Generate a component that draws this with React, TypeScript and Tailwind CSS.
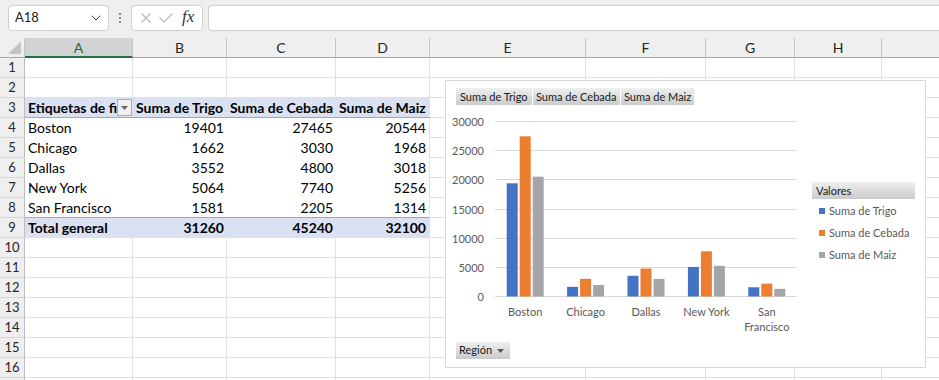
import React from "react";
import { ChevronDown } from "lucide-react";

const COLS = [
  { l: "A", w: "w-[108px]" },
  { l: "B", w: "w-[94px]" },
  { l: "C", w: "w-[109px]" },
  { l: "D", w: "w-[94px]" },
  { l: "E", w: "w-[156px]" },
  { l: "F", w: "w-[120px]" },
  { l: "G", w: "w-[89px]" },
  { l: "H", w: "w-[87px]" },
  { l: "", w: "w-[120px]" },
];

const DATA: [string, number, number, number][] = [
  ["Boston", 19401, 27465, 20544],
  ["Chicago", 1662, 3030, 1968],
  ["Dallas", 3552, 4800, 3018],
  ["New York", 5064, 7740, 5256],
  ["San Francisco", 1581, 2205, 1314],
];

const GRID = "border-r border-b border-[#e1e1e1]";

function RowHeader({ n }: { n: number | null }) {
  return (
    <div className="w-[25px] shrink-0 h-full bg-[#efefef] border-r border-r-[#bdbdbd] border-b border-b-[#d6d6d6] flex items-center justify-center text-[13px] text-[#262626]">
      {n}
    </div>
  );
}

function PlainCells({ from }: { from: number }) {
  return (
    <>
      {COLS.slice(from).map((c, i) => (
        <div key={i} className={`${c.w} shrink-0 h-full ${GRID}`} />
      ))}
    </>
  );
}

function Row({ n, children }: { n: number | null; children?: React.ReactNode }) {
  return (
    <div className="flex h-[20px]">
      <RowHeader n={n} />
      {children ? (
        <>
          {children}
          <PlainCells from={4} />
        </>
      ) : (
        <PlainCells from={0} />
      )}
    </div>
  );
}

function Chart() {
  const scale = 175 / 30000;
  const base = 191;
  const colors = ["#4472c4", "#ed7d31", "#a5a5a5"];
  const ticks = [0, 5000, 10000, 15000, 20000, 25000, 30000];
  return (
    <div className="absolute left-[445px] top-[80px] w-[481px] h-[288px] border border-[#d9d9d9] bg-white flex flex-col text-[11px]">
      <div className="mt-[7px] ml-[10px] flex gap-[1px] h-[17px] text-[#1a1a1a]">
        <div className="w-[76px] h-[17px] leading-[17px] pl-[4px] bg-linear-to-b from-[#efefef] to-[#cbcbcb]">Suma de Trigo</div>
        <div className="w-[87px] h-[17px] leading-[17px] pl-[3px] bg-linear-to-b from-[#efefef] to-[#cbcbcb]">Suma de Cebada</div>
        <div className="w-[73px] h-[17px] leading-[17px] pl-[3px] bg-linear-to-b from-[#efefef] to-[#cbcbcb]">Suma de Maiz</div>
      </div>
      <div className="flex h-[231px]">
        <svg width="359" height="231" className="shrink-0">
          {ticks.map((t) => {
            const y = Math.round(base - t * scale) + 0.5;
            return (
              <g key={t}>
                <line x1={49} x2={351} y1={y} y2={y} stroke="#d9d9d9" strokeWidth={1} />
                <text x={38} y={y} textAnchor="end" dominantBaseline="central" fontSize={11} fill="#595959" fontFamily="Lato, sans-serif">
                  {t}
                </text>
              </g>
            );
          })}
          {DATA.map((d, i) => {
            const c = 49 + 60.4 * (i + 0.5);
            const xs = [c - 18.5, c - 5.5, c + 7.5];
            return (
              <g key={d[0]}>
                {[d[1], d[2], d[3]].map((v, j) => {
                  const h = v * scale;
                  return <rect key={j} x={xs[j]} y={base - h + 0.5} width={11} height={h} fill={colors[j]} />;
                })}
                {d[0] === "San Francisco" ? (
                  <text textAnchor="middle" fontSize={11} fill="#595959" fontFamily="Lato, sans-serif">
                    <tspan x={c} y={206} dominantBaseline="central">San</tspan>
                    <tspan x={c} y={221} dominantBaseline="central">Francisco</tspan>
                  </text>
                ) : (
                  <text x={c} y={206} textAnchor="middle" dominantBaseline="central" fontSize={11} fill="#595959" fontFamily="Lato, sans-serif">
                    {d[0]}
                  </text>
                )}
              </g>
            );
          })}
        </svg>
        <div className="ml-[7px] mt-[77px] w-[103px] flex flex-col">
          <div className="h-[17px] leading-[17px] pl-[4px] bg-linear-to-b from-[#efefef] to-[#cbcbcb] text-[#1a1a1a]">Valores</div>
          <div className="mt-[1px]">
            {["Suma de Trigo", "Suma de Cebada", "Suma de Maiz"].map((s, i) => (
              <div key={s} className="h-[22px] flex items-center pl-[7px] text-[#595959]">
                <span className="w-[6px] h-[6px] mr-[4px] shrink-0" style={{ backgroundColor: colors[i] }} />
                {s}
              </div>
            ))}
          </div>
        </div>
      </div>
      <div className="mt-[6px] ml-[10px] w-[54px] h-[17px] bg-linear-to-b from-[#efefef] to-[#cbcbcb] flex items-center pl-[3px] text-[#1a1a1a]">
        Región
        <svg width="7" height="4" className="ml-auto mr-[6px]">
          <path d="M0 0 L7 0 L3.5 4 Z" fill="#555" />
        </svg>
      </div>
    </div>
  );
}

export default function App() {
  const fmt = (n: number) => String(n);
  return (
    <div className="relative w-[939px] h-[380px] overflow-hidden bg-white font-['Lato',sans-serif] text-black">
      {/* formula bar */}
      <div className="h-[38px] bg-[#efefef] flex items-start pt-[5px]">
        <div className="ml-[8px] w-[101px] h-[26px] rounded-[4px] border border-[#d0d0d0] bg-white flex items-center justify-between pl-[6px] pr-[4px] text-[13px] text-[#222]">
          <span>A18</span>
          <ChevronDown size={16} strokeWidth={1.5} color="#444" />
        </div>
        <div className="w-[22px] h-[26px] flex flex-col items-center justify-center gap-[2px]">
          <span className="w-[2px] h-[2px] bg-[#888]" />
          <span className="w-[2px] h-[2px] bg-[#888]" />
          <span className="w-[2px] h-[2px] bg-[#888]" />
        </div>
        <div className="w-[72px] h-[26px] rounded-[4px] border border-[#d0d0d0] bg-white flex items-center pl-[9px]">
          <svg width="10" height="10" viewBox="0 0 10 10">
            <path d="M0.5 0.5 L9.5 9.5 M9.5 0.5 L0.5 9.5" stroke="#b8b8b8" strokeWidth="1.2" fill="none" />
          </svg>
          <svg width="14" height="10" viewBox="0 0 14 10" className="ml-[8px]">
            <path d="M0.5 4.5 L5 9 L13.5 0.5" stroke="#b8b8b8" strokeWidth="1.2" fill="none" />
          </svg>
          <span className="ml-[9px] font-['Liberation_Serif',serif] italic text-[17px] leading-none text-[#333] -mt-[3px]">fx</span>
        </div>
        <div className="ml-[5px] flex-1 h-[26px] rounded-l-[4px] border border-r-0 border-[#d0d0d0] bg-white" />
      </div>

      {/* column headers */}
      <div className="flex h-[20px] bg-[#efefef] text-[14px] text-[#262626]">
        <div className="w-[25px] shrink-0 h-full border-r border-[#c6c6c6] border-b border-b-[#a6a6a6] flex items-end justify-end pr-[3px] pb-[3px]">
          <svg width="13" height="13" viewBox="0 0 13 13">
            <path d="M13 0 L13 13 L0 13 Z" fill="#c4c4c4" />
          </svg>
        </div>
        {COLS.map((c, i) => (
          <div
            key={i}
            className={`${c.w} shrink-0 h-full border-r border-[#c6c6c6] flex items-center justify-center ${
              i === 0 ? "bg-[#d3d3d3] border-b-2 border-b-[#217346] text-[#1c6a3c]" : "border-b border-b-[#a6a6a6]"
            }`}
          >
            {c.l}
          </div>
        ))}
      </div>

      {/* rows */}
      <div className="text-[14px]">
        <Row n={1} />
        <Row n={2} />
        <Row n={3}>
          <div className="w-[108px] shrink-0 h-full bg-[#d9e1f2] border-b border-[#8ea9db] flex items-start font-bold">
            <span className="flex-1 overflow-hidden whitespace-nowrap pl-[3px] leading-[19px]">Etiquetas de fila</span>
            <span className="w-[15px] h-[17px] mt-[1px] mr-[1px] shrink-0 border border-[#ababab] bg-[#f0f0f0] flex items-center justify-center">
              <svg width="7" height="4">
                <path d="M0 0 L7 0 L3.5 4 Z" fill="#666" />
              </svg>
            </span>
          </div>
          <div className="w-[94px] shrink-0 h-full bg-[#d9e1f2] border-b border-[#8ea9db] pl-[3px] overflow-hidden whitespace-nowrap font-bold leading-[19px]">Suma de Trigo</div>
          <div className="w-[109px] shrink-0 h-full bg-[#d9e1f2] border-b border-[#8ea9db] pl-[3px] overflow-hidden whitespace-nowrap font-bold leading-[19px]">Suma de Cebada</div>
          <div className="w-[94px] shrink-0 h-full bg-[#d9e1f2] border-b border-b-[#8ea9db] border-r border-r-[#e1e1e1] pl-[3px] overflow-hidden whitespace-nowrap font-bold leading-[19px]">Suma de Maiz</div>
        </Row>
        {DATA.map((d, i) => {
          const last = i === DATA.length - 1;
          const bb = last ? "border-b border-b-[#8ea9db]" : "";
          return (
            <Row key={d[0]} n={4 + i}>
              <div className={`w-[108px] shrink-0 h-full pl-[3px] leading-[19px] whitespace-nowrap ${bb}`}>{d[0]}</div>
              <div className={`w-[94px] shrink-0 h-full pr-[3px] text-right leading-[19px] ${bb}`}>{fmt(d[1])}</div>
              <div className={`w-[109px] shrink-0 h-full pr-[3px] text-right leading-[19px] ${bb}`}>{fmt(d[2])}</div>
              <div className={`w-[94px] shrink-0 h-full pr-[3px] text-right leading-[19px] border-r border-r-[#e1e1e1] ${bb}`}>{fmt(d[3])}</div>
            </Row>
          );
        })}
        <Row n={9}>
          <div className="w-[108px] shrink-0 h-full bg-[#d9e1f2] pl-[3px] font-bold leading-[19px] whitespace-nowrap">Total general</div>
          <div className="w-[94px] shrink-0 h-full bg-[#d9e1f2] pr-[3px] text-right font-bold leading-[19px]">31260</div>
          <div className="w-[109px] shrink-0 h-full bg-[#d9e1f2] pr-[3px] text-right font-bold leading-[19px]">45240</div>
          <div className="w-[94px] shrink-0 h-full bg-[#d9e1f2] pr-[3px] text-right font-bold leading-[19px] border-r border-r-[#e1e1e1]">32100</div>
        </Row>
        {[10, 11, 12, 13, 14, 15, 16].map((n) => (
          <Row key={n} n={n} />
        ))}
        <Row n={null} />
      </div>

      <Chart />
    </div>
  );
}
